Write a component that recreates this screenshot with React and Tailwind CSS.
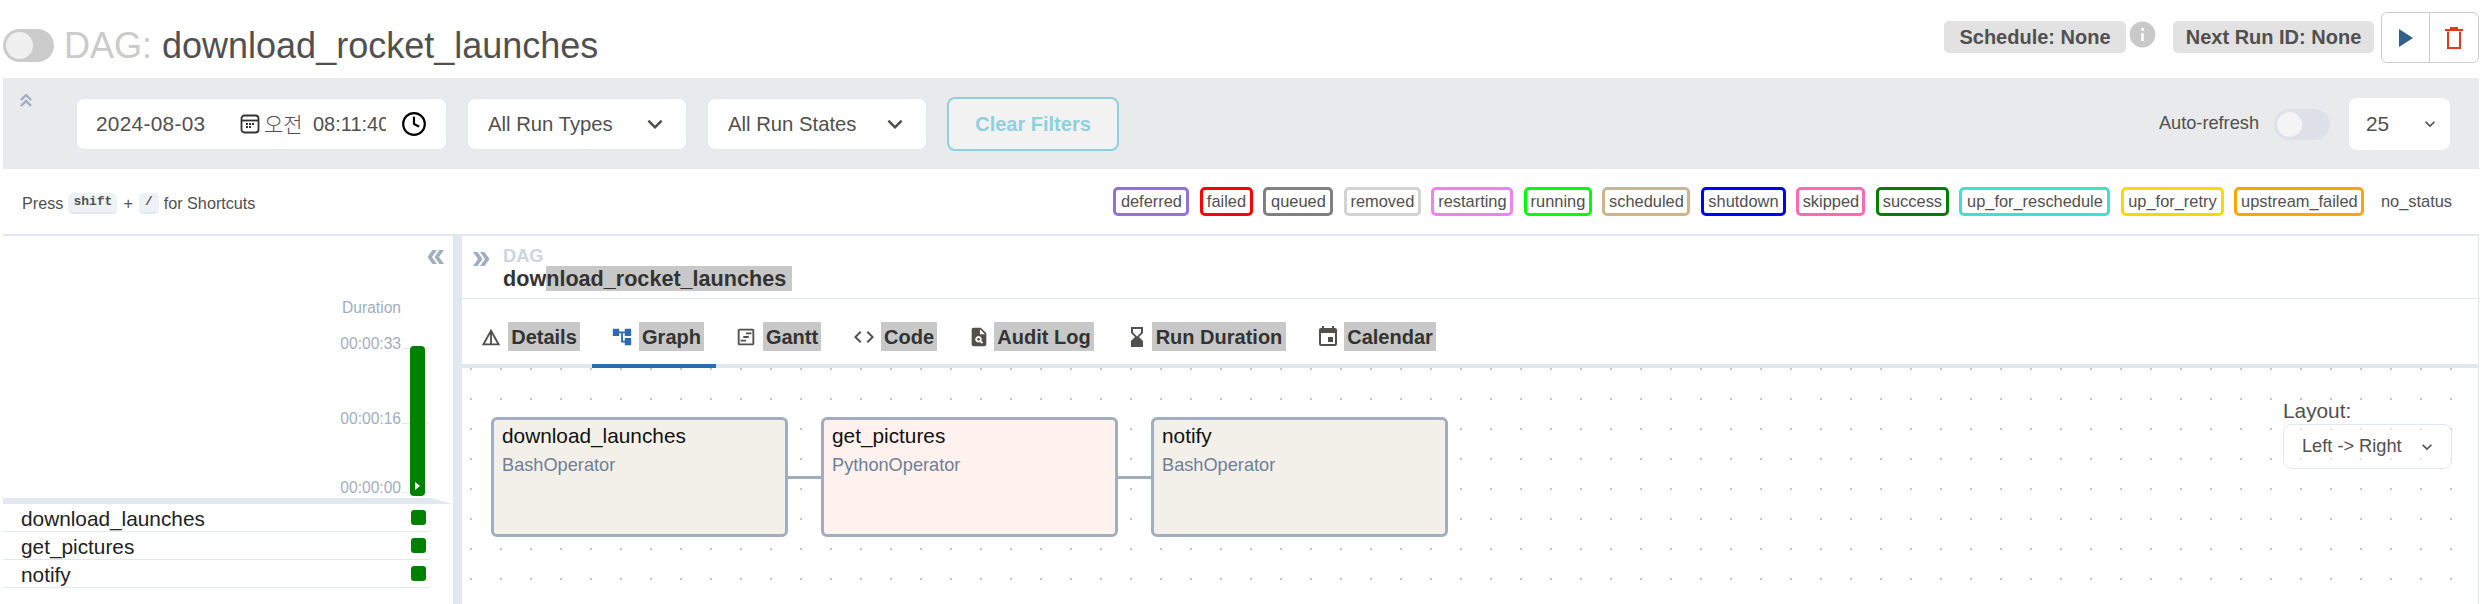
import {
  MdDetails, MdAccountTree, MdOutlineViewTimeline, MdCode, MdPlagiarism, MdHourglassBottom, MdEvent,
  MdDoubleArrow, MdInfo, MdKeyboardArrowDown,
} from 'react-icons/md';
import { FiClock } from 'react-icons/fi';

const legend = [
  { name: 'deferred', border: 'border-[#9370db]', w: 'w-[76px]' },
  { name: 'failed', border: 'border-[#ff0000]', w: 'w-[53px]' },
  { name: 'queued', border: 'border-[#808080]', w: 'w-[70px]' },
  { name: 'removed', border: 'border-[#d3d3d3]', w: 'w-[77px]' },
  { name: 'restarting', border: 'border-[#ee82ee]', w: 'w-[82px]' },
  { name: 'running', border: 'border-[#00ff00]', w: 'w-[68px]' },
  { name: 'scheduled', border: 'border-[#d2b48c]', w: 'w-[88px]' },
  { name: 'shutdown', border: 'border-[#0000ff]', w: 'w-[85px]' },
  { name: 'skipped', border: 'border-[#ff69b4]', w: 'w-[69px]' },
  { name: 'success', border: 'border-[#008000]', w: 'w-[73px]' },
  { name: 'up_for_reschedule', border: 'border-[#40e0d0]', w: 'w-[151px]' },
  { name: 'up_for_retry', border: 'border-[#ffd700]', w: 'w-[103px]' },
  { name: 'upstream_failed', border: 'border-[#ffa500]', w: 'w-[130px]' },
];

const tabs = [
  { name: 'Details', Icon: MdDetails, icon: 'ml-[18px] mr-[6px]', size: 22, bar: 'w-[72px]' },
  { name: 'Graph', Icon: MdAccountTree, icon: 'ml-[31px] mr-[6px] text-[#2b6cb0]', size: 22, bar: 'w-[65px]' },
  { name: 'Gantt', Icon: MdOutlineViewTimeline, icon: 'ml-[31px] mr-[6px]', size: 22, bar: 'w-[58px]' },
  { name: 'Code', Icon: MdCode, icon: 'ml-[31px] mr-[5px]', size: 24, bar: 'w-[56px]' },
  { name: 'Audit Log', Icon: MdPlagiarism, icon: 'ml-[31px] mr-[4px]', size: 22, bar: 'w-[100px]' },
  { name: 'Run Duration', Icon: MdHourglassBottom, icon: 'ml-[31px] mr-[3px]', size: 24, bar: 'w-[134px]' },
  { name: 'Calendar', Icon: MdEvent, icon: 'ml-[30px] mr-[4px]', size: 24, bar: 'w-[92px]' },
];

const tasks = ['download_launches', 'get_pictures', 'notify'];

const nodes = [
  { name: 'download_launches', op: 'BashOperator', bg: 'bg-[#f2f0e9]' },
  { name: 'get_pictures', op: 'PythonOperator', bg: 'bg-[#fff2ee]' },
  { name: 'notify', op: 'BashOperator', bg: 'bg-[#f2f0e9]' },
];

const Select = ({ label, className }) => (
  <div className={`h-[52px] bg-white rounded-[8px] border border-[#e2e8f0] flex items-center justify-between pl-[20px] pr-[16px] text-[20.3px] text-[#51504f] ${className}`}>
    <span>{label}</span>
    <MdKeyboardArrowDown size={30} />
  </div>
);

const App = () => {
  return (
    <div className="w-[2488px] h-[604px] overflow-hidden bg-white pl-[3px] pr-[9px] flex flex-col font-['Liberation_Sans',Arial,sans-serif] text-[#51504f]">
      {/* header */}
      <div className="h-[78px] shrink-0 flex items-start justify-between">
        <div className="flex items-center mt-[29px]">
          <div className="w-[51px] h-[33px] rounded-full bg-[#cbcbcb] p-[3px]">
            <div className="w-[27px] h-[27px] rounded-full bg-[#f0f0f0]"></div>
          </div>
          <h1 className="text-[36px] leading-[33px] ml-[10px] whitespace-pre"><span className="text-[#cbcbcb]">DAG: </span>download_rocket_launches</h1>
        </div>
        <div className="flex items-start mt-[12px]">
          <div className="h-[32px] w-[182px] mt-[9px] bg-[#e2e2e2] rounded-[5px] flex items-center justify-center font-bold text-[20px]">Schedule: None</div>
          <MdInfo size={31} className="text-[#c9c9c9] mt-[7px] ml-[1px] -mr-[1px]" />
          <div className="h-[32px] w-[201px] mt-[9px] ml-[16px] bg-[#e2e2e2] rounded-[5px] flex items-center justify-center font-bold text-[20px]">Next Run ID: None</div>
          <div className="ml-[7px] flex w-[98px] h-[51px] border border-[#cccccc] rounded-[6px]">
            <div className="w-[48px] border-r border-[#cccccc] flex items-center justify-center">
              <svg width="14" height="18" viewBox="0 0 14 18" className="text-[#2f5f8a] ml-[1px]"><path d="M0 0l14 9L0 18z" fill="currentColor" /></svg>
            </div>
            <div className="flex-1 flex items-center justify-center">
              <svg width="18" height="22" viewBox="0 0 18 22" fill="none" className="text-[#e43921]">
                <path d="M3 4.5V21h12V4.5" stroke="currentColor" strokeWidth="2" />
                <path d="M0 3h18" stroke="currentColor" strokeWidth="2" />
                <path d="M5 1h8" stroke="currentColor" strokeWidth="2" />
              </svg>
            </div>
          </div>
        </div>
      </div>

      {/* filter bar */}
      <div className="h-[91px] shrink-0 bg-[#e9eaeb] flex items-start relative">
        <svg width="12" height="13" viewBox="0 0 12 13" className="ml-[17px] mt-[16px] text-[#a0aec0]" fill="none" stroke="currentColor" strokeWidth="2.4">
          <path d="M1 6l5-5 5 5M1 12l5-5 5 5" />
        </svg>
        <div className="ml-[44px] mt-[20px] w-[371px] h-[52px] bg-white rounded-[8px] border border-[#e2e8f0] flex items-center pl-[19px] text-[20.8px]">
          <span className="w-[144px] shrink-0 tracking-[0.3px]">2024-08-03</span>
          <svg width="20" height="20" viewBox="0 0 20 20" className="shrink-0 text-[#333]" fill="none" stroke="currentColor" strokeWidth="1.8">
            <rect x="1.5" y="1.5" width="17" height="17" rx="3" />
            <path d="M2 6.5h16" />
            <path d="M6 10h2M9 10h2M12 10h2M6 13h2M9 13h2" />
          </svg>
          <span className="ml-[4px] w-[49px] shrink-0 font-['Noto_Sans_CJK_KR',sans-serif] font-light text-[21px]">오전</span>
          <span className="w-[73px] shrink-0 overflow-hidden whitespace-nowrap text-[20px]">08:11:40</span>
          <FiClock size={26} className="ml-[15px] text-black shrink-0" />
        </div>
        <Select label="All Run Types" className="ml-[20px] mt-[20px] w-[220px]" />
        <Select label="All Run States" className="ml-[20px] mt-[20px] w-[220px]" />
        <div className="ml-[20px] mt-[19px] w-[172px] h-[54px] border-2 border-[#8fd0de] rounded-[8px] bg-[#f2f2f2] flex items-center justify-center text-[#8fd0de] font-bold text-[20px]">Clear Filters</div>
        <div className="ml-auto mt-[20px] mr-[29px] flex items-center h-[52px]">
          <span className="text-[18.2px]">Auto-refresh</span>
          <div className="ml-[15px] w-[56px] h-[31px] rounded-full bg-[#dee2e8] p-[3px]">
            <div className="w-[25px] h-[25px] rounded-full bg-[#f4f4f4]"></div>
          </div>
          <div className="ml-[19px] w-[101px] h-[52px] bg-white rounded-[8px] flex items-center justify-between pl-[17px] pr-[10px] text-[20.8px]">
            <span>25</span>
            <MdKeyboardArrowDown size={20} />
          </div>
        </div>
      </div>

      {/* shortcuts and legend */}
      <div className="h-[67px] shrink-0 border-b-2 border-[#e2e8f0] flex items-start justify-between">
        <div className="flex items-center mt-[22px] ml-[19px] text-[16.2px]">
          <span>Press</span>
          <kbd className="ml-[5px] h-[21px] px-[5px] bg-[#edf2f7] border-b-2 border-[#e2e8f0] rounded-[5px] font-['Liberation_Mono',monospace] font-bold text-[13px] leading-[18px]">shift</kbd>
          <span className="mx-[6px]">+</span>
          <kbd className="h-[21px] px-[6px] bg-[#edf2f7] border-b-2 border-[#e2e8f0] rounded-[5px] font-['Liberation_Mono',monospace] font-bold text-[13px] leading-[18px]">/</kbd>
          <span className="ml-[5px]">for Shortcuts</span>
        </div>
        <div className="flex items-center gap-[10.5px] mt-[18px] mr-[27px] text-[16.4px]">
          {legend.map((s) => (
            <div key={s.name} className={`h-[29px] ${s.w} border-[3px] ${s.border} rounded-[5px] flex items-center justify-center`}>{s.name}</div>
          ))}
          <div className="ml-[6px]">no_status</div>
        </div>
      </div>

      <div className="flex-1 flex min-h-0">
        {/* grid panel */}
        <div className="w-[450px] shrink-0 flex flex-col">
          <div className="h-[262px] shrink-0 relative flex justify-end pr-[28px]">
            <MdDoubleArrow size={24} className="absolute right-[5px] top-[9px] rotate-180 text-[#a0aec0]" />
            <div className="absolute right-[24px] top-[112px] w-[27px] h-px bg-[#e8e8e8]"></div>
            <div className="absolute right-[24px] top-[187px] w-[27px] h-px bg-[#e8e8e8]"></div>
            <div className="absolute right-[24px] top-[256px] w-[27px] h-px bg-[#e8e8e8]"></div>
            <div className="flex flex-col items-end text-[15.6px] leading-[18px] text-[#a0aec0] pt-[63px]">
              <div>Duration</div>
              <div className="mt-[18px]">00:00:33</div>
              <div className="mt-[57px]">00:00:16</div>
              <div className="mt-[51px]">00:00:00</div>
            </div>
            <div className="relative ml-[9px] mt-[110px] w-[15px] h-[150px] bg-[#008000] rounded-[4px] flex items-end justify-center pb-[6px]">
              <div className="w-0 h-0 border-y-[4px] border-y-transparent border-l-[5px] border-l-white"></div>
            </div>
          </div>
          <div className="h-[6px] shrink-0 bg-[#e2e8f0] [clip-path:polygon(0_0,95%_0,100%_100%,0_100%)]"></div>
          {tasks.map((t) => (
            <div key={t} className="h-[28px] w-[427px] shrink-0 border-b border-[#e2e8f0] flex items-center justify-between pl-[18px] pr-[4px] text-[20.8px] text-[#222]">
              <span className="mt-[2px]">{t}</span>
              <div className="w-[15px] h-[15px] rounded-[3px] bg-[#008000]"></div>
            </div>
          ))}
        </div>
        <div className="w-[9px] shrink-0 bg-[#e2e8f0]"></div>

        {/* details panel */}
        <div className="flex-1 min-w-0 flex flex-col border-r border-[#e2e8f0]">
          <div className="h-[63px] shrink-0 border-b border-[#e2e8f0] flex">
            <MdDoubleArrow size={24} className="ml-[7px] mt-[11px] text-[#a0aec0]" />
            <div className="ml-[10px] pt-[12px]">
              <div className="text-[18.2px] leading-[16px] font-bold text-[#cbd5e0]">DAG</div>
              <div className="text-[21.6px] leading-[30px] font-bold text-[#333] whitespace-pre">dow<span className="bg-[#c8c8c8]">nload_rocket_launches </span></div>
            </div>
          </div>
          <div className="h-[69px] shrink-0 flex items-start border-b-4 border-[#e2e8f0]">
            {tabs.map((tab) => (
              <div key={tab.name} className="flex items-center mt-[23px] relative">
                <tab.Icon size={tab.size} className={tab.icon} />
                <span className={`h-[29px] ${tab.bar} bg-[#c8c8c8] flex items-center justify-center font-bold text-[20px] text-[#333]`}>{tab.name}</span>
                {tab.name === 'Graph' && <div className="absolute left-[12px] right-[-12px] top-[42px] h-[4px] bg-[#2b6cb0]"></div>}
              </div>
            ))}
          </div>
          <div className="flex-1 relative bg-[radial-gradient(#c4c4c4_1px,transparent_1.5px)] bg-[size:30px_30px] bg-[position:-6px_-14px]">
            <div className="flex items-center pt-[49px] pl-[29px]">
              {nodes.map((n, i) => (
                <div key={i} className="flex items-center">
                  {i > 0 && <div className="w-[33px] h-[3px] bg-[#a0aec0]"></div>}
                  <div className={`w-[297px] h-[120px] border-[3px] border-[#a0aec0] rounded-[6px] px-[8px] pt-[3px] ${n.bg}`}>
                    <div className="text-[20.8px] leading-[26px] text-[#111]">{n.name}</div>
                    <div className="text-[18.2px] leading-[26px] mt-[3px] text-[#718096]">{n.op}</div>
                  </div>
                </div>
              ))}
            </div>
            <div className="absolute top-[30px] right-[26px] w-[169px]">
              <div className="text-[20.8px] leading-[26px]">Layout:</div>
              <div className="h-[45px] bg-white/60 rounded-[8px] border border-[#e2e8f0] flex items-center justify-between pl-[18px] pr-[14px] text-[18.2px]">
                <span>Left -&gt; Right</span>
                <MdKeyboardArrowDown size={20} />
              </div>
            </div>
          </div>
        </div>
      </div>
    </div>
  );
};

export default App;
